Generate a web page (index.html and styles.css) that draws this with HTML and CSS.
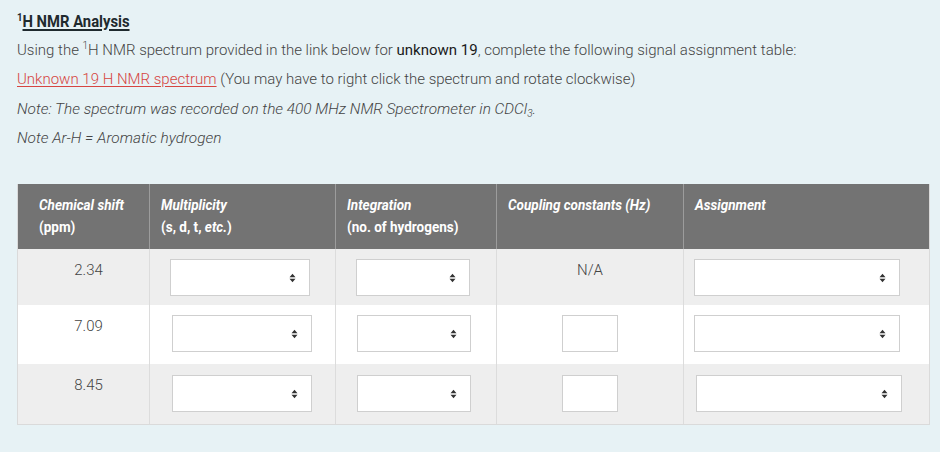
FILE: index.html
```html
<!DOCTYPE html>
<html>
<head>
<meta charset="utf-8">
<link rel="stylesheet" href="styles.css">
</head>
<body>
<div class="page">
  <h1 class="title"><span class="cond"><sup>1</sup><u>H NMR Analysis</u></span></h1>
  <p class="line first">Using the <sup>1</sup>H NMR spectrum provided in the link below for <b>unknown 19</b>, complete the following signal assignment table:</p>
  <p class="line"><a class="link" href="#">Unknown 19 H NMR spectrum</a> (You may have to right click the spectrum and rotate clockwise)</p>
  <p class="line note">Note: The spectrum was recorded on the 400 MHz NMR Spectrometer in CDCl<sub>3</sub>.</p>
  <p class="line note">Note Ar-H = Aromatic hydrogen</p>

  <div class="table">
    <div class="hd c1"><div class="cond hcond"><em>Chemical shift</em><br>(ppm)</div></div>
    <div class="hd"><div class="cond hcond"><em>Multiplicity</em><br>(s, d, t, <em>etc.</em>)</div></div>
    <div class="hd"><div class="cond hcond"><em>Integration</em><br>(no. of hydrogens)</div></div>
    <div class="hd"><div class="cond hcond"><em>Coupling constants (Hz)</em></div></div>
    <div class="hd"><div class="cond hcond"><em>Assignment</em></div></div>

    <div class="td num grey">2.34</div>
    <div class="td grey pl20"><span class="sel w140"><svg class="arr" width="7" height="10" viewBox="0 0 7 10"><path d="M0.5 4.3L3.5 0.8L6.5 4.3Z M0.5 5.7L3.5 9.2L6.5 5.7Z" fill="#333"/></svg></span></div>
    <div class="td grey pl20"><span class="sel w114"><svg class="arr" width="7" height="10" viewBox="0 0 7 10"><path d="M0.5 4.3L3.5 0.8L6.5 4.3Z M0.5 5.7L3.5 9.2L6.5 5.7Z" fill="#333"/></svg></span></div>
    <div class="td grey center"><span class="na">N/A</span></div>
    <div class="td grey pl10"><span class="sel w206"><svg class="arr" width="7" height="10" viewBox="0 0 7 10"><path d="M0.5 4.3L3.5 0.8L6.5 4.3Z M0.5 5.7L3.5 9.2L6.5 5.7Z" fill="#333"/></svg></span></div>

    <div class="td num white">7.09</div>
    <div class="td white pl22"><span class="sel w140"><svg class="arr" width="7" height="10" viewBox="0 0 7 10"><path d="M0.5 4.3L3.5 0.8L6.5 4.3Z M0.5 5.7L3.5 9.2L6.5 5.7Z" fill="#333"/></svg></span></div>
    <div class="td white pl21"><span class="sel w114"><svg class="arr" width="7" height="10" viewBox="0 0 7 10"><path d="M0.5 4.3L3.5 0.8L6.5 4.3Z M0.5 5.7L3.5 9.2L6.5 5.7Z" fill="#333"/></svg></span></div>
    <div class="td white center"><span class="box"></span></div>
    <div class="td white pl10"><span class="sel w206"><svg class="arr" width="7" height="10" viewBox="0 0 7 10"><path d="M0.5 4.3L3.5 0.8L6.5 4.3Z M0.5 5.7L3.5 9.2L6.5 5.7Z" fill="#333"/></svg></span></div>

    <div class="td num grey">8.45</div>
    <div class="td grey pl22 pt11"><span class="sel w140"><svg class="arr" width="7" height="10" viewBox="0 0 7 10"><path d="M0.5 4.3L3.5 0.8L6.5 4.3Z M0.5 5.7L3.5 9.2L6.5 5.7Z" fill="#333"/></svg></span></div>
    <div class="td grey pl21 pt11"><span class="sel w114"><svg class="arr" width="7" height="10" viewBox="0 0 7 10"><path d="M0.5 4.3L3.5 0.8L6.5 4.3Z M0.5 5.7L3.5 9.2L6.5 5.7Z" fill="#333"/></svg></span></div>
    <div class="td grey center pt11"><span class="box"></span></div>
    <div class="td grey pl12 pt11"><span class="sel w206"><svg class="arr" width="7" height="10" viewBox="0 0 7 10"><path d="M0.5 4.3L3.5 0.8L6.5 4.3Z M0.5 5.7L3.5 9.2L6.5 5.7Z" fill="#333"/></svg></span></div>
  </div>
</div>
</body>
</html>
```

FILE: styles.css
```css
html, body {
  margin: 0;
  padding: 0;
  background: #e7f2f5;
}
.page {
  width: 940px;
  height: 452px;
  padding: 10px 0 0 17px;
  box-sizing: border-box;
  font-family: Roboto, "Liberation Sans", sans-serif;
  font-weight: 300;
  color: #444;
  font-size: 15px;
}
.cond {
  display: inline-block;
  transform: scaleX(0.87);
  transform-origin: left center;
  white-space: nowrap;
}
.hcond {
  transform: scaleX(0.9);
}
.title {
  margin: 0;
  height: 22px;
  font-family: Roboto, sans-serif;
  font-weight: 700;
  font-size: 17px;
  line-height: 22px;
  color: #1f2a2e;
}
.title u {
  text-decoration: underline;
  text-decoration-thickness: 1.5px;
  text-underline-offset: 2px;
}
.title sup {
  font-size: 11px;
  line-height: 0;
  vertical-align: 6px;
}
.line {
  margin: 0;
  height: 29.3px;
  line-height: 29px;
  white-space: nowrap;
}
.line.first { margin-top: 4px; }
.line sup {
  font-size: 10px;
  line-height: 0;
  vertical-align: 6px;
}
.line b {
  font-weight: 400;
  color: #1a1a1a;
}
.note {
  font-style: italic;
  font-size: 15.4px;
}
.note sub {
  font-size: 10px;
  line-height: 0;
  vertical-align: -3px;
}
.link {
  color: #d64541;
  text-decoration: underline;
  text-underline-offset: 2px;
}
.table {
  margin-top: 31px;
  width: 913px;
  display: grid;
  grid-template-columns: 131px 186px 161px 187px 246px;
  grid-template-rows: 65px 56px 59px 60px;
  border: 1px solid #dadada;
  border-top: 0;
  box-sizing: border-box;
}
.hd {
  background: #737373;
  color: #fff;
  font-family: Roboto, sans-serif;
  font-weight: 700;
  font-size: 15px;
  line-height: 22px;
  padding: 10px 11px 0;
  border-left: 1px solid #9c9c9c;
  overflow: hidden;
}
.hd em { font-style: italic; }
.hd.c1 { border-left: 0; padding-left: 21px; }
.td {
  border-left: 1px solid #dcdcdc;
  box-sizing: border-box;
  padding-top: 10px;
}
.td.num { border-left: 0; }
.grey { background: #eeeeee; }
.white { background: #ffffff; }
.num {
  text-align: center;
  padding-left: 10px;
  padding-top: 10px;
  font-weight: 300;
  color: #444;
  font-size: 15px;
  line-height: 22px;
}
.center { text-align: center; }
.na {
  display: inline-block;
  font-weight: 300;
  color: #444;
  font-size: 15px;
  line-height: 22px;
}
.pl20 { padding-left: 20px; }
.pl21 { padding-left: 21px; }
.pl22 { padding-left: 22px; }
.pl10 { padding-left: 10px; }
.pl12 { padding-left: 12px; }
.pt11 { padding-top: 11px; }
.sel {
  display: flex;
  align-items: center;
  justify-content: flex-end;
  height: 37px;
  box-sizing: border-box;
  background: #fff;
  border: 1px solid #cfcfcf;
  padding-right: 13px;
}
.w140 { width: 140px; }
.w114 { width: 114px; }
.w206 { width: 206px; }
.box {
  display: inline-block;
  width: 56px;
  height: 37px;
  box-sizing: border-box;
  background: #fff;
  border: 1px solid #cfcfcf;
  vertical-align: top;
}
.arr { display: block; }
```
